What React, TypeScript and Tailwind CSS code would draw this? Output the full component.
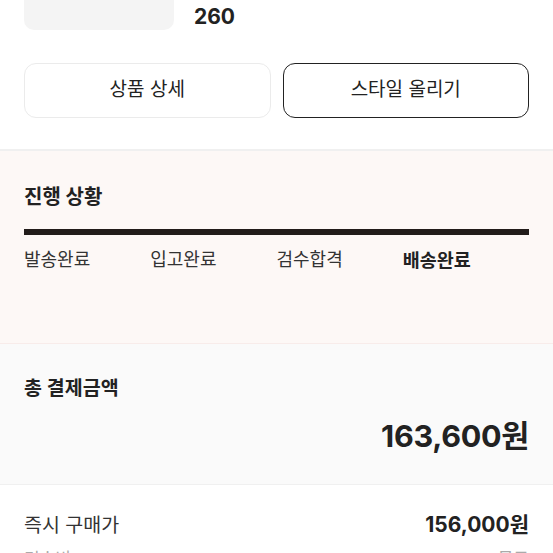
const font = { fontFamily: '"Inter", "Noto Sans CJK KR", sans-serif' };

const steps = ['발송완료', '입고완료', '검수합격', '배송완료'];

export default function App() {
  return (
    <div className="w-[553px] h-[553px] overflow-hidden bg-white text-[#222222]" style={font}>
      {/* product summary */}
      <div className="flex gap-5 px-6">
        <div className="w-[150px] h-[100px] -mt-[70px] rounded-[10px] bg-[#f4f4f4]"></div>
        <div className="self-end text-[21px] font-bold leading-[28px] -mb-[1px]">260</div>
      </div>

      <div className="grid grid-cols-2 gap-3 px-6 mt-[33px]">
        <button className="h-[55px] rounded-[12px] border border-[#ebebeb] bg-white text-[19px] text-[#222222]">
          상품 상세
        </button>
        <button className="h-[55px] rounded-[12px] border-[1.5px] border-[#222222] bg-white text-[19px] text-[#222222]">
          스타일 올리기
        </button>
      </div>

      {/* progress */}
      <div className="mt-[31px] border-t-2 border-[#f0f0f0] bg-[#fdf8f6] px-6 pt-[32px] pb-[70px] border-b border-b-[#f8ecea]">
        <h3 className="text-[20px] font-bold leading-[28px]">진행 상황</h3>
        <div className="mt-[18px] h-[6px] bg-[#221c1a]"></div>
        <div className="grid grid-cols-4 mt-[12px]">
          {steps.map((s, i) => (
            <div
              key={s}
              className={`leading-[26px] ${i === steps.length - 1 ? 'text-[18.5px] font-bold' : 'text-[18px] text-[#333333]'}`}
            >
              {s}
            </div>
          ))}
        </div>
      </div>

      {/* total */}
      <div className="bg-[#fafafa] px-6 pt-[30px] pb-[30px] border-b border-[#f0f0f0]">
        <div className="text-[19.5px] font-semibold leading-[28px]">총 결제금액</div>
        <div className="mt-[16px] text-right text-[30.5px] font-bold leading-[36px] tracking-[-0.3px]">163,600원</div>
      </div>

      <div className="px-6 pt-[26px]">
        <div className="flex justify-between items-center">
          <span className="text-[19.5px] leading-[28px] text-[#333333]">즉시 구매가</span>
          <span className="text-[21px] font-bold leading-[28px]">156,000원</span>
        </div>
        <div className="flex justify-between items-center mt-[8px]">
          <span className="text-[17px] leading-[24px] text-[#aaaaaa]">검수비</span>
          <span className="text-[17px] leading-[24px] text-[#aaaaaa]">무료</span>
        </div>
      </div>
    </div>
  );
}
